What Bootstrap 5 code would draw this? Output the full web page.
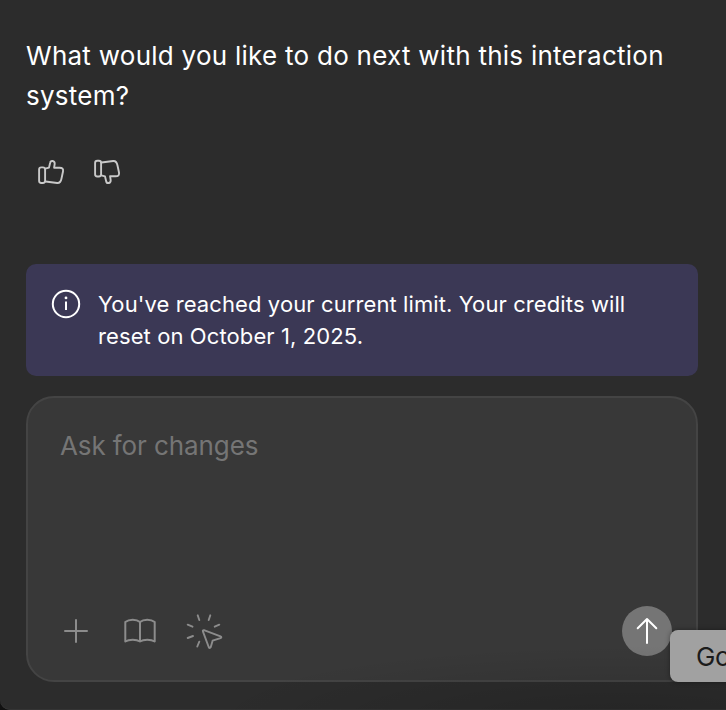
<!DOCTYPE html>
<html lang="en" data-bs-theme="dark">
<head>
<meta charset="utf-8">
<meta name="viewport" content="width=device-width, initial-scale=1">
<title>Chat panel</title>
<link href="https://cdn.jsdelivr.net/npm/bootstrap@5.3.0/dist/css/bootstrap.min.css" rel="stylesheet">
<style>
body { background: #111; font-family: Inter, "Liberation Sans", sans-serif; }
svg { display: block; fill: none; stroke: currentColor; stroke-linecap: round; stroke-linejoin: round; }
.panel { height: 710px; padding: 36px 28px 0 26px; background: #2c2c2c; border-bottom-left-radius: 10px; box-shadow: inset 0 -1px 0 #343434; }
.panel::after { content: ""; position: absolute; inset: 630px 0 0 0; background: radial-gradient(ellipse 420px 75px at 620px 90px, rgba(0,0,0,.16), rgba(0,0,0,0)); pointer-events: none; }
.message { font-size: 26px; line-height: 40px; letter-spacing: .26px; color: #fff; }
.feedback { gap: 28px; margin-top: 42px; padding-left: 10.5px; color: #c9c9c9; }
.feedback .btn, .tools .btn { color: inherit; line-height: 0; }
.limit { height: 112px; margin-top: 78px; padding: 24px 24px 0; gap: 16px; background: #3b3855; border-radius: 10px; color: #fff; font-size: 22px; line-height: 32px; letter-spacing: .1px; }
.composer { height: 286px; margin-top: 20px; padding: 28px 24px 24px 32px; background: #383838; border: 2px solid #444; border-radius: 28px; }
.prompt { resize: none; font-size: 26px; line-height: 40px; letter-spacing: -.1px; color: #fff; height: 120px; }
.prompt::placeholder { color: #757575; opacity: 1; }
.tools { color: #8c8c8c; gap: 26px; }
.send { width: 50px; height: 50px; background: #757575; color: #fff; }
.tip { left: 670px; top: 630px; width: 120px; height: 52px; padding-left: 26px; background: #a1a1a1; color: #1b1b1b; border-radius: 8px; font-size: 26px; line-height: 53px; letter-spacing: -.3px; box-shadow: 0 0 5px rgba(0,0,0,.4); z-index: 2; }
</style>
</head>
<body class="overflow-hidden">
<main class="panel position-relative overflow-hidden">
  <p class="message mb-0">What would you like to do next with this interaction system?</p>
  <div class="feedback d-flex">
    <button class="btn p-0 border-0" aria-label="Good response">
      <svg width="28" height="28" viewBox="0 0 28 28" stroke-width="1.9"><rect x="2.1" y="9.4" width="6" height="15.600" rx="2.200"/><path d="M8.300 10.700L12 9.600L13.100 5C13.600 2 17.800 2.400 17.700 5.800L17.100 9.700H22.600C25.400 9.700 26.500 11.100 26 13.500L24.500 20.500C23.900 23.600 22.700 25.200 20.200 25L8.500 23.500"/></svg>
    </button>
    <button class="btn p-0 border-0" aria-label="Bad response">
      <svg width="28" height="28" viewBox="0 0 28 28" stroke-width="1.9"><rect x="2.1" y="2.700" width="6" height="15.800" rx="2.200"/><path d="M8.300 17.300L12 18.400L13.100 23C13.600 26 17.800 25.600 17.700 22.200L17.100 18.300H22.600C25.400 18.300 26.500 16.900 26 14.500L24.500 7.500C23.900 4.400 22.700 2.800 20.200 3L8.500 4.500"/></svg>
    </button>
  </div>
  <div class="limit d-flex" role="alert">
    <svg class="flex-shrink-0" width="32" height="32" viewBox="0 0 32 32" stroke-width="2"><circle cx="16" cy="16" r="13.200"/><path d="M16 13.500V22" stroke-linecap="butt"/><circle cx="16" cy="9.900" r="1.400" fill="currentColor" stroke="none"/></svg>
    <div>You've reached your current limit. Your credits will reset on October 1, 2025.</div>
  </div>
  <div class="composer d-flex flex-column justify-content-between">
    <textarea class="prompt form-control bg-transparent border-0 p-0 shadow-none" placeholder="Ask for changes"></textarea>
    <div class="d-flex justify-content-between align-items-center">
      <div class="tools d-flex align-items-center">
        <button class="btn p-0 border-0" aria-label="Add">
          <svg width="32" height="36" viewBox="0 0 32 36" stroke-width="2"><path d="M5 18H27M16 7V29"/></svg>
        </button>
        <button class="btn p-0 border-0" aria-label="Library">
          <svg width="40" height="36" viewBox="0 0 40 36" stroke-width="2"><path d="M22 9C18.500 5.900 11 5.900 7.300 9V28.500C11 26 18.500 26 22 28.500C25.500 26 33 26 36.700 28.500V9C33 5.900 25.500 5.900 22 9V28.500"/></svg>
        </button>
        <button class="btn p-0 border-0" aria-label="Select element">
          <svg width="40" height="36" viewBox="0 0 40 36" stroke-width="1.900"><path d="M13.700 2.300L15.300 7M26.300 2.300L24.700 7M3.700 11.700L8.500 13.700M35.300 11.700L30.700 13.700M3.700 25L9 23M13.300 33.500L15.300 28.700M18.900 18.300L24.700 34Q25.700 36 26.800 34L28.600 27.700L36.500 25.100Q38.200 24.200 36.500 23.300L20 17.200Q18.500 17 18.900 18.300Z"/></svg>
        </button>
      </div>
      <button class="send btn rounded-circle border-0 p-0 d-flex align-items-center justify-content-center" aria-label="Send">
        <svg width="26" height="30" viewBox="0 0 26 30" stroke-width="2"><path d="M13 27V3M3.700 12.300L13 3L22.300 12.300"/></svg>
      </button>
    </div>
  </div>
  <div class="tip position-absolute text-nowrap">Go</div>
</main>
<script src="https://cdn.jsdelivr.net/npm/bootstrap@5.3.0/dist/js/bootstrap.bundle.min.js"></script>
</body>
</html>
